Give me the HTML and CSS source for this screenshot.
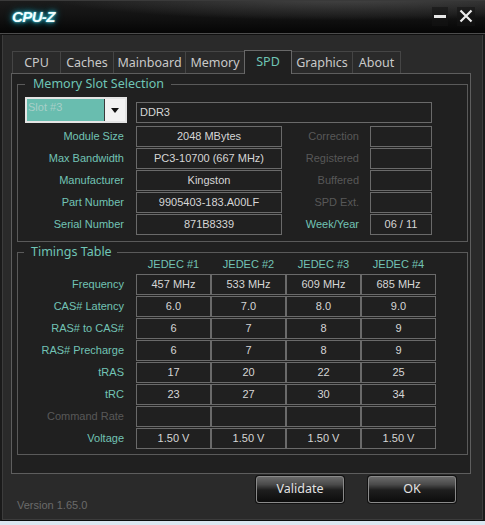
FILE: index.html
```html
<!DOCTYPE html>
<html>
<head>
<meta charset="utf-8">
<title>CPU-Z</title>
<link rel="stylesheet" href="styles.css">
</head>
<body>
<div class="window">
  <div class="titlebar">
    <span class="logo">CPU-Z</span>
    <div class="wbtns">
      <span class="wbtn wmin"><span class="minbar"></span></span>
      <span class="wbtn wclose"><svg width="16" height="16" viewBox="0 0 16 16"><path d="M2.5 2.5L13.5 13.5M13.5 2.5L2.5 13.5" stroke="#ececec" stroke-width="2.2" fill="none"/></svg></span>
    </div>
  </div>
  <div class="client">
    <div class="tabs">
      <div class="tab t1">CPU</div>
      <div class="tab t2">Caches</div>
      <div class="tab t3">Mainboard</div>
      <div class="tab t4">Memory</div>
      <div class="tab t5 active">SPD</div>
      <div class="tab t6">Graphics</div>
      <div class="tab t7">About</div>
    </div>
    <div class="panel">
      <div class="group g-slot">
        <span class="gtitle gt1">Memory Slot Selection</span>
        <div class="srow first">
          <div class="combo"><span class="combo-text">Slot #3</span><span class="combo-btn"><span class="tri"></span></span></div>
          <div class="field wide">DDR3</div>
        </div>
        <div class="srow"><span class="lbl">Module Size</span><div class="field">2048 MBytes</div><span class="lbl r dis">Correction</span><div class="field sm"></div></div>
        <div class="srow"><span class="lbl">Max Bandwidth</span><div class="field">PC3-10700 (667 MHz)</div><span class="lbl r dis">Registered</span><div class="field sm"></div></div>
        <div class="srow"><span class="lbl">Manufacturer</span><div class="field">Kingston</div><span class="lbl r dis">Buffered</span><div class="field sm"></div></div>
        <div class="srow"><span class="lbl">Part Number</span><div class="field">9905403-183.A00LF</div><span class="lbl r dis">SPD Ext.</span><div class="field sm"></div></div>
        <div class="srow"><span class="lbl">Serial Number</span><div class="field">871B8339</div><span class="lbl r">Week/Year</span><div class="field sm">06 / 11</div></div>
      </div>
      <div class="group g-tim">
        <span class="gtitle gt2">Timings Table</span>
        <div class="trow head"><span class="lbl"></span><span class="th">JEDEC #1</span><span class="th">JEDEC #2</span><span class="th">JEDEC #3</span><span class="th">JEDEC #4</span></div>
        <div class="trow"><span class="lbl">Frequency</span><div class="cell">457 MHz</div><div class="cell">533 MHz</div><div class="cell">609 MHz</div><div class="cell">685 MHz</div></div>
        <div class="trow"><span class="lbl">CAS# Latency</span><div class="cell">6.0</div><div class="cell">7.0</div><div class="cell">8.0</div><div class="cell">9.0</div></div>
        <div class="trow"><span class="lbl">RAS# to CAS#</span><div class="cell">6</div><div class="cell">7</div><div class="cell">8</div><div class="cell">9</div></div>
        <div class="trow"><span class="lbl">RAS# Precharge</span><div class="cell">6</div><div class="cell">7</div><div class="cell">8</div><div class="cell">9</div></div>
        <div class="trow"><span class="lbl">tRAS</span><div class="cell">17</div><div class="cell">20</div><div class="cell">22</div><div class="cell">25</div></div>
        <div class="trow"><span class="lbl">tRC</span><div class="cell">23</div><div class="cell">27</div><div class="cell">30</div><div class="cell">34</div></div>
        <div class="trow"><span class="lbl dis">Command Rate</span><div class="cell"></div><div class="cell"></div><div class="cell"></div><div class="cell"></div></div>
        <div class="trow"><span class="lbl">Voltage</span><div class="cell">1.50 V</div><div class="cell">1.50 V</div><div class="cell">1.50 V</div><div class="cell">1.50 V</div></div>
      </div>
    </div>
    <div class="footer">
      <span class="version">Version 1.65.0</span>
      <button class="btn">Validate</button>
      <button class="btn">OK</button>
    </div>
  </div>
</div>
</body>
</html>
```

FILE: styles.css
```css
html, body {
  margin: 0;
  padding: 0;
}
body {
  width: 485px;
  height: 525px;
  overflow: hidden;
  background: #dce6f0;
  font-family: "Liberation Sans", Arial, sans-serif;
}
.window {
  width: 485px;
  height: 521px;
  display: flex;
  flex-direction: column;
  background: #2a2a2a;
}
.titlebar {
  height: 33px;
  flex: none;
  border-bottom: 1px solid #4c4c4c;
  display: flex;
  align-items: center;
  padding: 0 10px 0 12px;
  background:
    radial-gradient(ellipse 420px 34px at 72% -4px, rgba(110,110,110,0.55), rgba(60,60,60,0.25) 60%, transparent 72%),
    linear-gradient(to bottom, #1c1c1c 0%, #111 55%, #050505 100%);
  box-shadow: inset 0 1px 0 #3a3a3a;
}
.logo {
  font-family: "Liberation Sans", Arial, sans-serif;
  font-style: italic;
  font-weight: bold;
  font-size: 15px;
  letter-spacing: -0.6px;
  color: #f2ffff;
  text-shadow: 0 0 2px #5fe0f0, 0 0 5px #20b8d0, 0 0 8px #1090a8;
  margin-top: -1px;
}
.wbtns {
  margin-left: auto;
  display: flex;
  align-items: center;
  gap: 9px;
  margin-top: -1px;
}
.wbtn {
  height: 19px;
  display: flex;
  align-items: center;
  justify-content: center;
  background: rgba(20,20,20,0.6);
}
.wmin { width: 16px; }
.wclose { width: 18px; }
.minbar {
  width: 12px;
  height: 3px;
  background: #e6e6e6;
  margin-top: 1px;
}
.client {
  flex: 1;
  border-top: 1px solid #101010;
  border-left: 2px solid #1a1a1a;
  border-right: 2px solid #1a1a1a;
  border-bottom: 1px solid #0c0c0c;
  box-shadow: inset 1px 0 0 #3c3c3c, inset -1px 0 0 #3c3c3c, inset 0 -1px 0 #3c3c3c;
  padding: 15px 0 0 9px;
  display: flex;
  flex-direction: column;
}
.tabs {
  display: flex;
  align-items: flex-end;
  height: 23px;
  padding-left: 1px;
  position: relative;
  z-index: 1;
}
.tab {
  box-sizing: border-box;
  height: 22px;
  border: 1px solid #454545;
  border-bottom: none;
  margin-left: -1px;
  font-family: "Noto Sans", "Open Sans", sans-serif;
  font-size: 12.5px;
  color: #c9c9c9;
  text-align: center;
  line-height: 21px;
}
.tab.t1 { margin-left: 0; width: 49px; }
.tab.t2 { width: 54px; }
.tab.t3 { width: 73px; }
.tab.t4 { width: 60px; }
.tab.t5 { width: 48px; }
.tab.t6 { width: 62px; }
.tab.t7 { width: 49px; }
.tab.active {
  height: 24px;
  margin-bottom: -1px;
  background: #202020;
  border-color: #686868;
  color: #6fc5b6;
  line-height: 22px;
  position: relative;
  z-index: 2;
}
.panel {
  box-sizing: border-box;
  width: 460px;
  height: 401px;
  border: 1px solid #5e5e5e;
  background: #202020;
  padding: 10px 0 0 5px;
}
.group {
  box-sizing: border-box;
  position: relative;
  width: 451px;
  border: 1px solid #5a5a5a;
  display: flex;
  flex-direction: column;
}
.g-slot {
  height: 158px;
  padding: 12px 0 0 7px;
  gap: 1px;
}
.g-tim {
  height: 203px;
  margin-top: 10px;
  padding: 2px 0 0 7px;
  gap: 1px;
}
.gtitle {
  position: absolute;
  top: -9px;
  background: #202020;
  font-family: "Noto Sans", "Open Sans", sans-serif;
  font-size: 12.5px;
  line-height: 16px;
  color: #6fc5b6;
}
.gt1 { left: 7px; padding: 0 7px 0 8px; }
.gt2 { left: 6px; padding: 0 5px 0 7px; }
.srow {
  display: flex;
  height: 21px;
  gap: 10px;
}
.srow.first {
  height: 26px;
  align-items: flex-end;
  margin-bottom: 2px;
}
.lbl {
  box-sizing: border-box;
  width: 101px;
  flex: none;
  text-align: right;
  padding-right: 2px;
  font-size: 11px;
  line-height: 21px;
  color: #72c3b5;
  white-space: nowrap;
}
.lbl.r {
  width: 68px;
  padding-right: 1px;
}
.lbl.dis { color: #585858; }
.field {
  box-sizing: border-box;
  width: 146px;
  height: 21px;
  flex: none;
  border: 1px solid #6a6a6a;
  font-size: 11px;
  line-height: 19px;
  color: #d6d6d6;
  text-align: center;
  white-space: nowrap;
  overflow: hidden;
}
.field.wide {
  width: 296px;
  text-align: left;
  padding-left: 3px;
}
.field.sm { width: 62px; }
.combo {
  box-sizing: border-box;
  width: 102px;
  height: 26px;
  margin-right: -1px;
  border: 2px solid #e4e4e4;
  background: #69bdaf;
  display: flex;
  justify-content: space-between;
}
.combo-text {
  font-size: 11px;
  line-height: 14px;
  padding: 1px 0 0 1px;
  color: #a8cfc8;
}
.combo-btn {
  box-sizing: border-box;
  width: 21px;
  height: 22px;
  border-left: 1px solid #3a3a3a;
  background: #f2f2f2;
  display: flex;
  align-items: center;
  justify-content: center;
}
.tri {
  width: 0;
  height: 0;
  border-left: 4.5px solid transparent;
  border-right: 4.5px solid transparent;
  border-top: 5px solid #111;
  margin-top: 1px;
}
.trow {
  display: flex;
  height: 21px;
}
.trow.head { height: 18px; }
.trow .lbl { margin-right: 10px; }
.th {
  width: 75px;
  flex: none;
  text-align: center;
  font-size: 11px;
  line-height: 18px;
  color: #72c3b5;
}
.cell {
  box-sizing: border-box;
  width: 75px;
  height: 21px;
  flex: none;
  border: 1px solid #6a6a6a;
  text-align: center;
  font-size: 11px;
  line-height: 19px;
  color: #d6d6d6;
}
.footer {
  flex: 1;
  display: flex;
  align-items: flex-start;
  padding: 2px 0 0 6px;
}
.version {
  margin-top: 22px;
  font-size: 11px;
  line-height: 14px;
  color: #6a6a6a;
  margin-right: auto;
}
.btn {
  box-sizing: border-box;
  width: 88px;
  height: 27px;
  margin-left: 24px;
  border: 1px solid #8a8a8a;
  border-radius: 3px;
  background: linear-gradient(to bottom, #6a6a6a 0%, #4a4a4a 30%, #1e1e1e 52%, #0c0c0c 100%);
  box-shadow: 0 0 0 1px #111;
  font-family: "Noto Sans", "Open Sans", sans-serif;
  font-size: 12.5px;
  color: #e2e2e2;
  padding: 0 0 2px 0;
  line-height: 22px;
}
.btn:last-child { margin-right: 27px; }
```
